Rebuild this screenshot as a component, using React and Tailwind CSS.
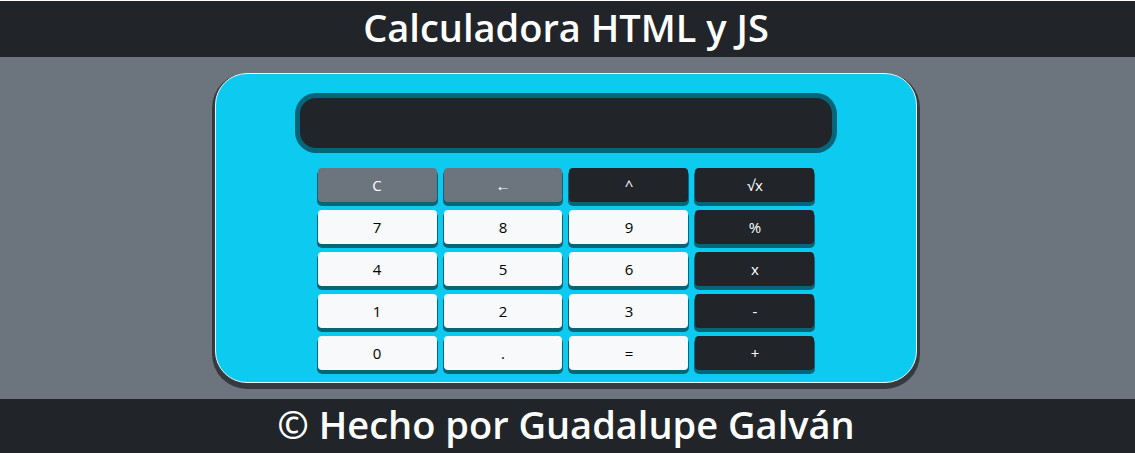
import { useState } from "react";

const KEYS = [
  { label: "C", tone: "gray", name: "Borrar todo" },
  { label: "←", tone: "gray", name: "Borrar último" },
  { label: "^", tone: "dark", name: "Potencia" },
  { label: "√x", tone: "dark", name: "Raíz cuadrada" },
  { label: "7", tone: "light" },
  { label: "8", tone: "light" },
  { label: "9", tone: "light" },
  { label: "%", tone: "dark" },
  { label: "4", tone: "light" },
  { label: "5", tone: "light" },
  { label: "6", tone: "light" },
  { label: "x", tone: "dark" },
  { label: "1", tone: "light" },
  { label: "2", tone: "light" },
  { label: "3", tone: "light" },
  { label: "-", tone: "dark" },
  { label: "0", tone: "light" },
  { label: ".", tone: "light" },
  { label: "=", tone: "light" },
  { label: "+", tone: "dark" },
];

const TONES = {
  gray: "bg-[#6c757d] text-white",
  dark: "bg-[#212529] text-white",
  light: "bg-[#f8f9fa] text-black",
};

function evaluate(text) {
  const match = text.match(/^(-?[\d.]+)([\^%x+-])(-?[\d.]+)$/);
  if (!match) return text;
  const a = Number(match[1]);
  const b = Number(match[3]);
  const results = { "^": a ** b, "%": a % b, x: a * b, "+": a + b, "-": a - b };
  return String(results[match[2]]);
}

function Key({ label, tone, name, onPress }) {
  return (
    <button
      type="button"
      aria-label={name}
      onClick={() => onPress(label)}
      className={`h-[34px] rounded-[4px] text-[15px] leading-[34px] shadow-[0_3px_0_1px_rgba(0,0,0,0.5)] ${TONES[tone]}`}
    >
      {label}
    </button>
  );
}

export default function App() {
  const [value, setValue] = useState("");

  const press = (label) => {
    if (label === "C") setValue("");
    else if (label === "←") setValue(value.slice(0, -1));
    else if (label === "√x") setValue(String(Math.sqrt(Number(value))));
    else if (label === "=") setValue(evaluate(value));
    else setValue(value + label);
  };

  return (
    <div className="flex min-h-screen flex-col border-t border-white bg-[#6c757d] font-['Open_Sans',sans-serif]">
      <header className="bg-[#212529] pt-px pr-[3px] pb-[5px] text-center text-white">
        <h1 className="text-[38px] leading-[50px] font-semibold">Calculadora HTML y JS</h1>
      </header>
      <main className="flex justify-center py-4 pr-[3px]">
        <section className="flex w-[62%] flex-col items-center rounded-[32px] border border-[#e9f6fa] bg-[#0dcaf0] pt-6 pb-3 shadow-[0_3px_0_3px_rgba(0,0,0,0.5)]">
          <input
            type="text"
            readOnly
            aria-label="Resultado"
            value={value}
            className="h-[50px] w-[76%] rounded-[16px] bg-[#212529] px-4 text-right text-2xl text-white shadow-[0_0_0_5px_rgba(0,0,0,0.5)] outline-none"
          />
          <div className="mt-5 grid w-[71%] grid-cols-4 gap-x-[7px] gap-y-2">
            {KEYS.map((key) => (
              <Key key={key.label} {...key} onPress={press} />
            ))}
          </div>
        </section>
      </main>
      <footer className="grow bg-[#212529] pr-[3px] pb-1 text-center text-white">
        <h2 className="text-[38px] leading-[50px] font-semibold">© Hecho por Guadalupe Galván</h2>
      </footer>
    </div>
  );
}
